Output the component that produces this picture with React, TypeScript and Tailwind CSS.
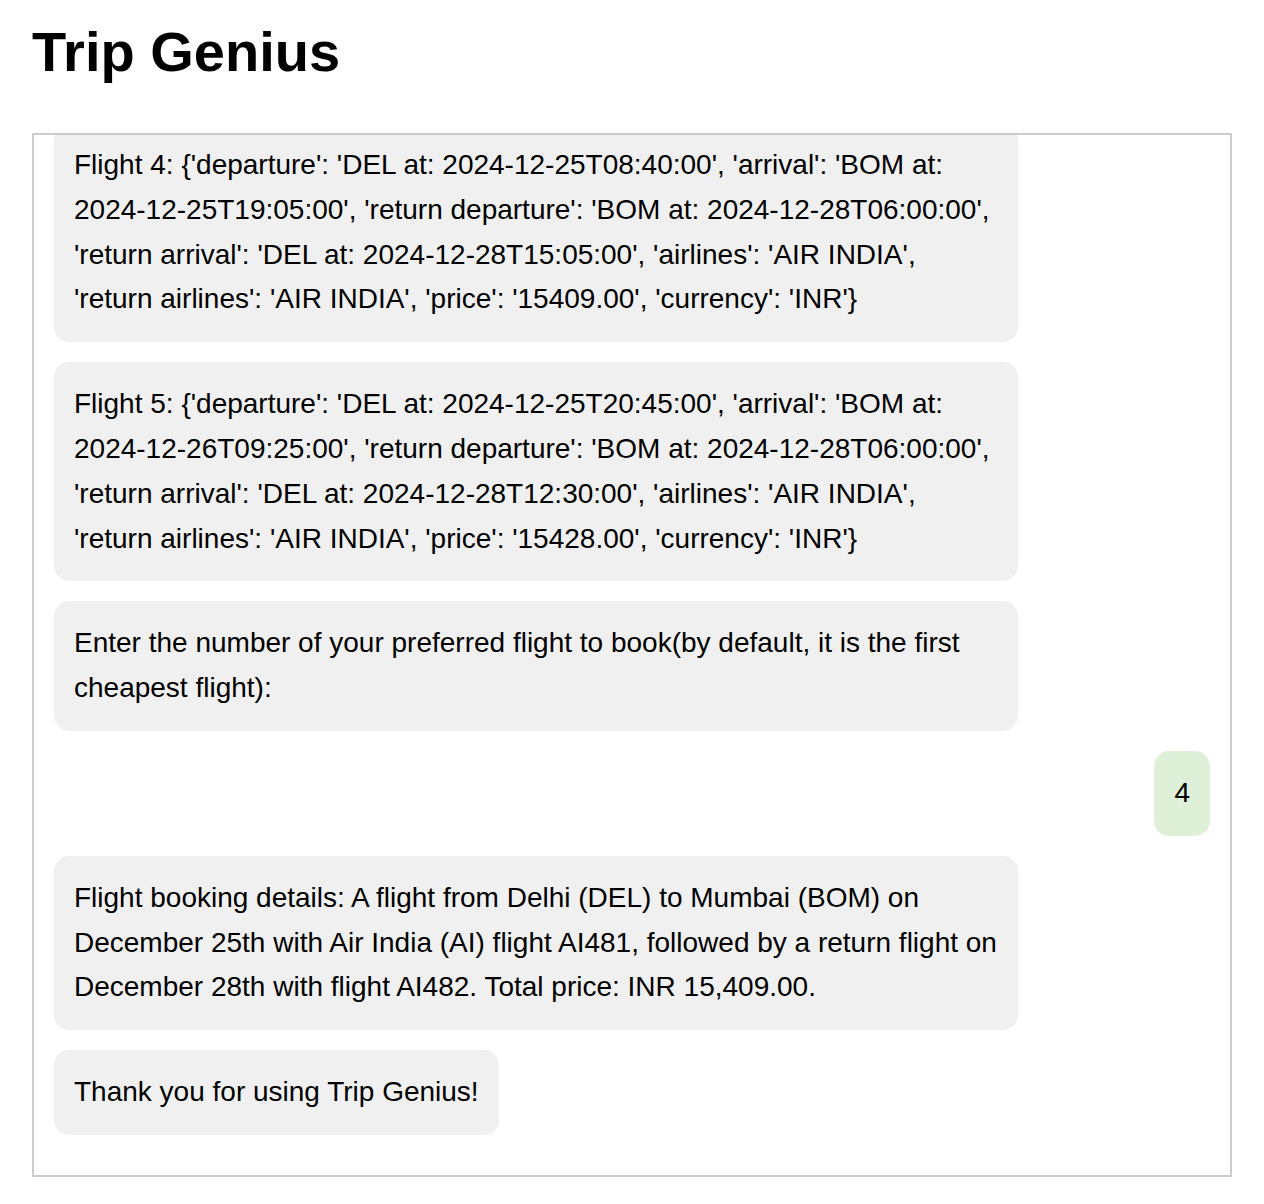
import React from "react";

type Msg = { from: "bot" | "user"; text: string };

const messages: Msg[] = [
  {
    from: "bot",
    text: "Flight 4: {'departure': 'DEL at: 2024-12-25T08:40:00', 'arrival': 'BOM at: 2024-12-25T19:05:00', 'return departure': 'BOM at: 2024-12-28T06:00:00', 'return arrival': 'DEL at: 2024-12-28T15:05:00', 'airlines': 'AIR INDIA', 'return airlines': 'AIR INDIA', 'price': '15409.00', 'currency': 'INR'}",
  },
  {
    from: "bot",
    text: "Flight 5: {'departure': 'DEL at: 2024-12-25T20:45:00', 'arrival': 'BOM at: 2024-12-26T09:25:00', 'return departure': 'BOM at: 2024-12-28T06:00:00', 'return arrival': 'DEL at: 2024-12-28T12:30:00', 'airlines': 'AIR INDIA', 'return airlines': 'AIR INDIA', 'price': '15428.00', 'currency': 'INR'}",
  },
  {
    from: "bot",
    text: "Enter the number of your preferred flight to book(by default, it is the first cheapest flight):",
  },
  { from: "user", text: "4" },
  {
    from: "bot",
    text: "Flight booking details: A flight from Delhi (DEL) to Mumbai (BOM) on December 25th with Air India (AI) flight AI481, followed by a return flight on December 28th with flight AI482. Total price: INR 15,409.00.",
  },
  { from: "bot", text: "Thank you for using Trip Genius!" },
];

export default function App() {
  return (
    <div
      className="min-h-[1204px] bg-white px-[32px] text-black"
      style={{ fontFamily: '"Liberation Sans", Arial, sans-serif' }}
    >
      <h1 className="pt-[20px] pb-[49px] text-[56px] leading-[64px] font-bold">
        Trip Genius
      </h1>
      <div className="flex h-[1044px] flex-col justify-end overflow-hidden border-2 border-[#cccccc] px-[20px] pb-[20px]">
        {messages.map((m, i) => (
          <div
            key={i}
            className={
              m.from === "user"
                ? "mb-[20px] max-w-[964px] shrink-0 self-end rounded-[15px] bg-[#dff0d8] p-[20px] text-[28px] leading-[1.6]"
                : "mb-[20px] max-w-[964px] shrink-0 self-start rounded-[15px] bg-[#f0f0f0] p-[20px] text-[28px] leading-[1.6]"
            }
          >
            {m.text}
          </div>
        ))}
      </div>
    </div>
  );
}
